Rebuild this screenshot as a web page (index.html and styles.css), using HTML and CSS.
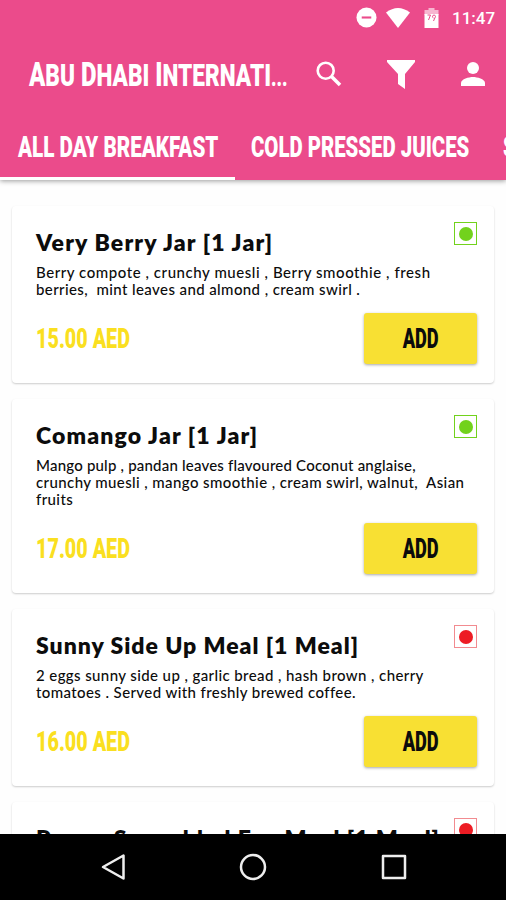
FILE: index.html
```
<!DOCTYPE html>
<html lang="en">
<head>
    <meta charset="UTF-8">
    <meta name="viewport" content="width=device-width, initial-scale=1.0">
    <title>Menu</title>
    <link rel="stylesheet" href="styles.css">
</head>
<body>
    <header>
        <div class="status">
            <svg class="dnd" viewBox="0 0 22 22"><circle cx="11" cy="11" r="10.5" fill="#fff"/><path d="M6 11h10" stroke="#eb4b8b" stroke-width="2.2"/></svg>
            <svg class="wifi" viewBox="0 0 24 20"><path d="M0 4.5Q12-4.500 24 4.500L12 20z" fill="#fff"/></svg>
            <svg class="battery" viewBox="0 0 14 20"><path d="M0 2h4V0h6v2h4v5H0z" fill="#f7b5d0"/><path d="M0 6h14v14H0z" fill="#fff"/><path d="M3 7h3L4 12M9 10a1.500 1.500 0 1 1 2-1.500L9 13" fill="none" stroke="#eb4b8b"/></svg>
            <span class="time">11:47</span>
        </div>
        <div class="toolbar">
            <h1><span>A<small>BU</small> D<small>HABI</small> I<small>NTERNATI</small><small class="dots">...</small></span></h1>
            <svg class="search" viewBox="0 0 26 26"><circle cx="9.700" cy="9.700" r="8" fill="none" stroke="#fff" stroke-width="2.600"/><path d="M15.500 15.500L24 24" stroke="#fff" stroke-width="3.500"/></svg>
            <svg class="filter" viewBox="0 0 28 29"><path d="M0 0h28v2L18 14v15l-7-5V14L0 2z" fill="#fff"/></svg>
            <svg class="user" viewBox="0 0 24 24"><circle cx="12" cy="6" r="6" fill="#fff"/><path d="M0 24v-3c0-4 8-6 12-6s12 2 12 6v3z" fill="#fff"/></svg>
        </div>
        <nav>
            <a class="tab active"><span>ALL DAY BREAKFAST</span></a>
            <a class="tab juices"><span>COLD PRESSED JUICES</span></a>
            <a class="tab"><span>SMOOTHIES</span></a>
        </nav>
    </header>

    <main>
        <div class="card">
            <div class="badge veg"></div>
            <h2>Very Berry Jar [1 Jar]</h2>
            <p><span class="wide">Berry compote , crunchy muesli , Berry smoothie , fresh</span><span>berries,&nbsp; mint leaves and almond , cream swirl .</span></p>
            <div class="buy">
                <span class="price">15.00 AED</span>
                <button><span>ADD</span></button>
            </div>
        </div>
        <div class="card">
            <div class="badge veg"></div>
            <h2>Comango Jar [1 Jar]</h2>
            <p><span class="tight">Mango pulp , pandan leaves flavoured Coconut anglaise,</span><span>crunchy muesli , mango smoothie , cream swirl, walnut,&nbsp; Asian</span><span>fruits</span></p>
            <div class="buy">
                <span class="price">17.00 AED</span>
                <button><span>ADD</span></button>
            </div>
        </div>
        <div class="card">
            <div class="badge nonveg"></div>
            <h2 class="long">Sunny Side Up Meal [1 Meal]</h2>
            <p><span>2 eggs sunny side up , garlic bread , hash brown , cherry</span><span>tomatoes . Served with freshly brewed coffee.</span></p>
            <div class="buy">
                <span class="price">16.00 AED</span>
                <button><span>ADD</span></button>
            </div>
        </div>
        <div class="card">
            <div class="badge nonveg"></div>
            <h2 class="long">Power Scrambled Egg Meal [1 Meal]</h2>
        </div>
    </main>

    <footer>
        <svg viewBox="0 0 28 28"><path d="M25.500 2.500v23L5 14z"/></svg>
        <svg viewBox="0 0 28 28"><circle cx="14" cy="14" r="12"/></svg>
        <svg viewBox="0 0 28 28"><path d="M3 3h22v22H3z"/></svg>
    </footer>
</body>
</html>
```
FILE: styles.css
```
* {
    box-sizing: border-box;
}
body {
    margin: 0;
    height: 900px;
    display: flex;
    flex-direction: column;
    overflow: hidden;
    background: #fefefe;
    font-family: Lato, sans-serif;
    color: #0c0c0c;
}
header {
    height: 180px;
    flex: none;
    background: #eb4b8b;
    color: #fff;
    box-shadow: 0 1px 5px rgba(0, 0, 0, 0.4);
    z-index: 1;
    overflow: hidden;
}
.status {
    height: 35px;
    display: flex;
    align-items: center;
    justify-content: flex-end;
    padding-right: 11px;
}
.dnd {
    width: 21px;
    height: 21px;
    margin-right: 9px;
}
.wifi {
    width: 24px;
    height: 20px;
    margin-right: 14px;
}
.battery {
    width: 15px;
    height: 20px;
    margin-right: 13px;
}
.time {
    width: 43px;
    font: 500 17px Roboto, sans-serif;
    white-space: nowrap;
}
.toolbar {
    height: 78px;
    display: flex;
    align-items: center;
    padding: 0 21px 0 29px;
}
h1 {
    width: 287px;
    margin: 0;
    padding-top: 2px;
    font: 900 34px/40px Roboto, sans-serif;
    white-space: nowrap;
}
h1 small {
    font-size: 32px;
}
h1 .dots {
    font-size: 26px;
}
h1 span, .tab span, .price, button span {
    display: inline-block;
    transform-origin: left center;
}
h1 span {
    transform: scaleX(0.706);
}
.search {
    width: 26px;
    height: 26px;
    flex: none;
    margin-right: 45px;
}
.filter {
    width: 28px;
    height: 29px;
    flex: none;
    margin-right: 46px;
}
.user {
    width: 24px;
    height: 24px;
    flex: none;
}
nav {
    height: 67px;
    display: flex;
}
.tab {
    width: 235px;
    flex: none;
    padding: 17px 0 0 18px;
    font: 900 29px/34px Roboto, sans-serif;
    white-space: nowrap;
}
.tab span {
    transform: scaleX(0.712);
}
.juices {
    width: 250px;
    padding-left: 16px;
}
.juices span {
    transform: scaleX(0.702);
}
.active {
    border-bottom: 3px solid #fff;
}
main {
    flex: 1;
    padding: 26px 12px 0;
    overflow: hidden;
}
.card {
    position: relative;
    height: 177px;
    margin-bottom: 16px;
    padding: 22px 17px 19px 24px;
    background: #fff;
    border-radius: 4px;
    box-shadow: 0 1px 2px rgba(0, 0, 0, 0.2);
    display: flex;
    flex-direction: column;
}
.card:nth-child(2) {
    height: 194px;
}
.badge {
    position: absolute;
    top: 16px;
    right: 17px;
    width: 23px;
    height: 23px;
    border: 1px solid;
    display: flex;
    align-items: center;
    justify-content: center;
}
.badge::after {
    content: "";
    width: 14px;
    height: 14px;
    border-radius: 50%;
    background: currentColor;
}
.veg {
    color: #72d21c;
}
.nonveg {
    color: #ed1c24;
    border-color: #f28b90;
}
h2 {
    margin: 0;
    font-size: 23px;
    line-height: 28px;
    font-weight: 800;
    letter-spacing: 1.15px;
    white-space: nowrap;
}
.long {
    letter-spacing: 0.98px;
}
p {
    margin: 8px 0 0;
    font-size: 15px;
    line-height: 17px;
    font-weight: 500;
    letter-spacing: 0.4px;
}
p span {
    display: block;
    white-space: nowrap;
}
.wide {
    letter-spacing: 0.56px;
}
.tight {
    letter-spacing: 0.2px;
}
.buy {
    margin-top: auto;
    display: flex;
    justify-content: space-between;
    align-items: center;
}
.price {
    color: #fadf20;
    font: 900 28px/34px Roboto, sans-serif;
    transform: scaleX(0.705);
}
button {
    width: 113px;
    height: 51px;
    padding: 0;
    border: 0;
    border-radius: 3px;
    background: #f8e033;
    box-shadow: 0 1px 3px rgba(0, 0, 0, 0.35);
    font: 900 28px Roboto, sans-serif;
    color: #0c0c0c;
}
button span {
    transform: scaleX(0.65);
    transform-origin: center;
}
footer {
    height: 66px;
    flex: none;
    background: #000;
    display: flex;
    align-items: center;
    justify-content: space-between;
    padding: 0 98px;
    z-index: 1;
}
footer svg {
    width: 28px;
    height: 28px;
    fill: none;
    stroke: #eee;
    stroke-width: 2.5;
    stroke-linejoin: round;
}
```
